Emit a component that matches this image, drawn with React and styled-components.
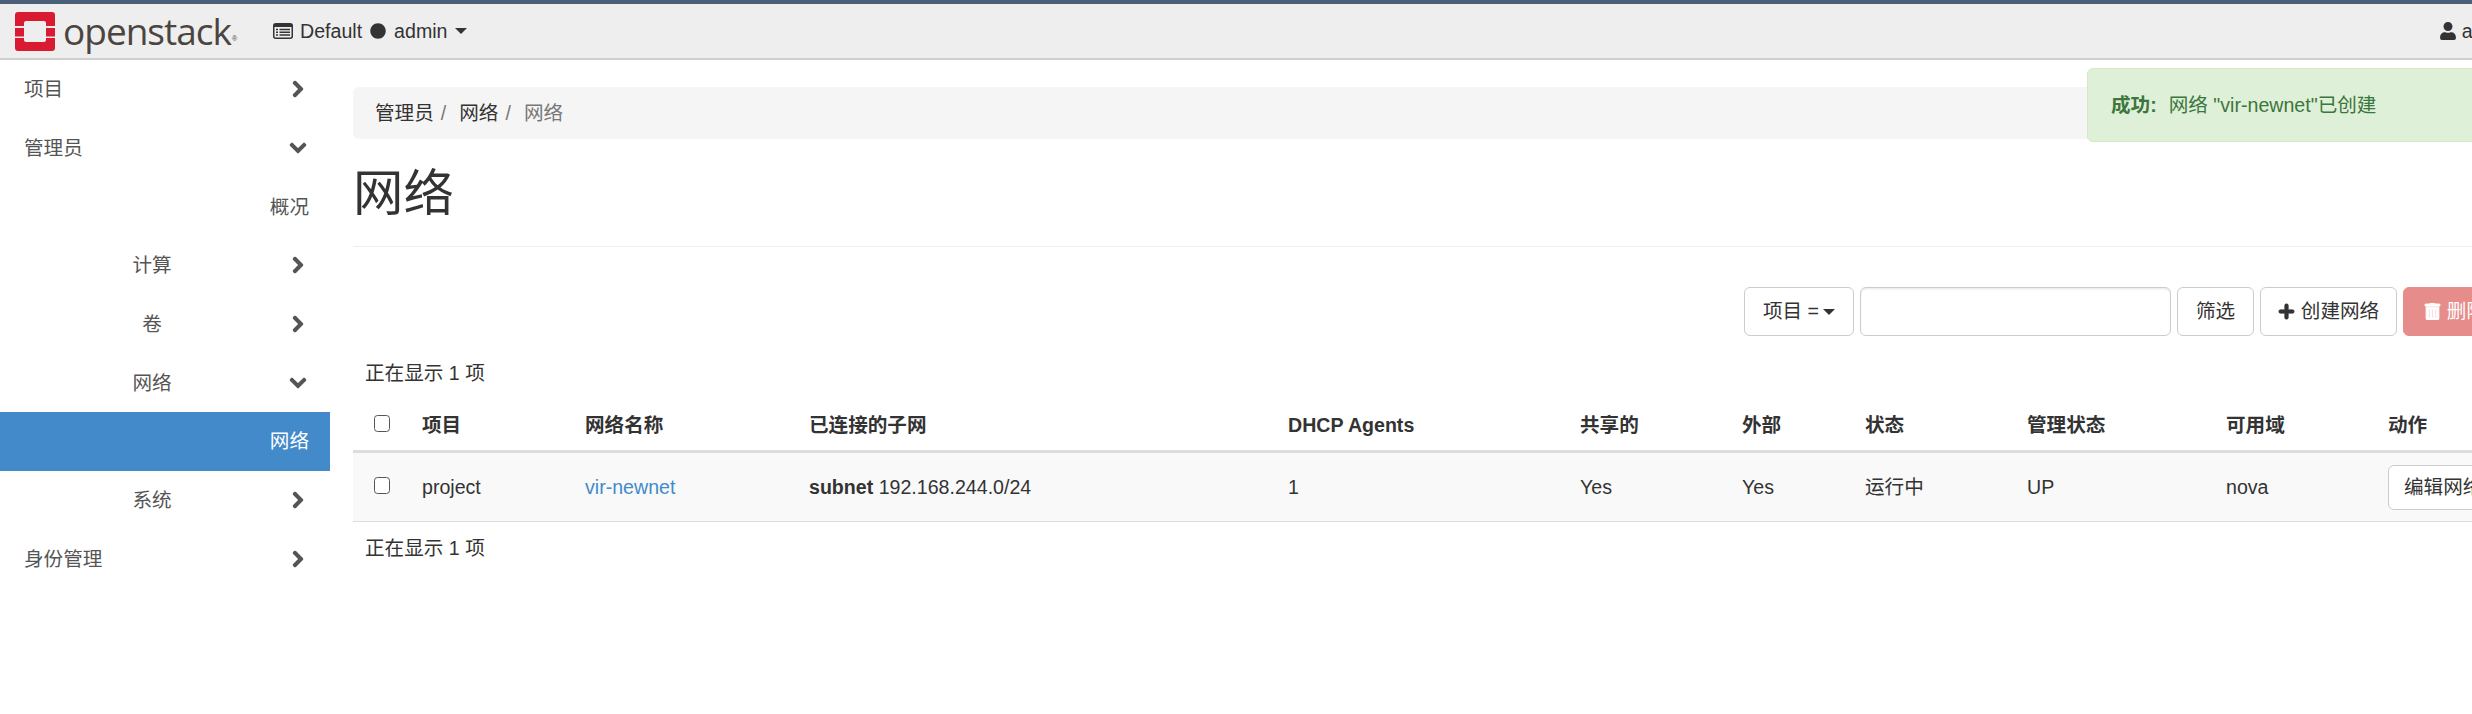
import styled, { createGlobalStyle } from "styled-components"
import { FaChevronRight, FaChevronDown, FaCircle, FaPlus, FaTrashAlt, FaUser } from "react-icons/fa"

const GlobalStyle = createGlobalStyle`
  html, body {
    margin: 0;
    overflow: hidden;
    background: #fff;
  }
  body {
    font-family: "Liberation Sans", "Noto Sans CJK SC", sans-serif;
    font-size: 19.6px;
    line-height: 1.43;
    color: #333;
  }
`;

const navItems = [
  { label: '项目', level: 1, arrow: 'right' },
  { label: '管理员', level: 1, arrow: 'down' },
  { label: '概况', level: 3 },
  { label: '计算', level: 2, arrow: 'right' },
  { label: '卷', level: 2, arrow: 'right' },
  { label: '网络', level: 2, arrow: 'down' },
  { label: '网络', level: 3, active: true },
  { label: '系统', level: 2, arrow: 'right' },
  { label: '身份管理', level: 1, arrow: 'right' },
];

const columns = [
  { title: '项目', width: 163 },
  { title: '网络名称', width: 224 },
  { title: '已连接的子网', width: 479 },
  { title: 'DHCP Agents', width: 292 },
  { title: '共享的', width: 162 },
  { title: '外部', width: 123 },
  { title: '状态', width: 162 },
  { title: '管理状态', width: 199 },
  { title: '可用域', width: 162 },
  { title: '动作', width: 240 },
];

const Page = styled.div`
  position: relative;
  width: 2617px;
`;

const TopBar = styled.header`
  display: flex;
  align-items: center;
  box-sizing: border-box;
  height: 60px;
  padding-right: 82px;
  background: #eee;
  border-top: 4px solid #4a5f78;
  border-bottom: 2px solid #cfcfcf;
`;

const Logo = styled.div`
  display: flex;
  align-items: center;
  width: 273px;
  padding-left: 15px;
  box-sizing: border-box;
  color: #4b4541;
`;

const LogoWord = styled.span`
  margin-left: 8px;
  font-family: "Open Sans", sans-serif;
  font-size: 37px;
  font-weight: 500;
  line-height: 40px;
  letter-spacing: -1px;
`;

const LogoMark = styled.span`
  align-self: flex-end;
  margin: 0 0 8px 1px;
  font-size: 7px;
  line-height: 8px;
`;

const Scope = styled.div`
  display: flex;
  align-items: center;
  color: #333;
`;

const ScopeDot = styled(FaCircle)`
  width: 16px;
  height: 16px;
  margin: 0 8px;
`;

const Caret = styled.span`
  display: inline-block;
  margin-left: ${(props) => props.$gap || 8}px;
  border-top: 6px solid currentColor;
  border-left: 6px solid transparent;
  border-right: 6px solid transparent;
`;

const UserMenu = styled.div`
  display: flex;
  align-items: center;
  margin-left: auto;
`;

const UserIcon = styled(FaUser)`
  width: 16px;
  height: 18px;
  margin-right: 6px;
`;

const Body = styled.div`
  display: flex;
`;

const Sidebar = styled.nav`
  flex: 0 0 330px;
`;

const NavRow = styled.div`
  display: flex;
  align-items: center;
  box-sizing: border-box;
  height: 58.7px;
  padding: 0 ${(props) => (props.$level === 3 ? 21 : 22)}px 0 24px;
  color: ${(props) => (props.$active ? '#fff' : '#555')};
  background: ${(props) => (props.$active ? '#428aca' : 'transparent')};
`;

const NavLabel = styled.span`
  flex: 1;
  padding-right: ${(props) => (props.$level === 2 ? 8 : 0)}px;
  text-align: ${(props) => ({ 1: 'left', 2: 'center', 3: 'right' })[props.$level]};
`;

const NavArrow = styled.span`
  display: flex;
  justify-content: center;
  flex: 0 0 20px;
  color: #555;

  svg {
    width: 18px;
    height: 18px;
    stroke: currentColor;
    stroke-width: 36;
  }
`;

const Main = styled.main`
  flex: 1;
  min-width: 0;
  padding-left: 23px;
`;

const Breadcrumb = styled.ol`
  display: flex;
  align-items: center;
  box-sizing: border-box;
  height: 52px;
  margin: 27px 0 0;
  padding: 0 22px;
  list-style: none;
  background: #f5f5f5;
  border-radius: 6px;
`;

const Crumb = styled.li`
  color: ${(props) => (props.$current ? '#777' : '#333')};
`;

const CrumbDivider = styled.li`
  padding: 0 13px 0 7px;
  color: #777;
`;

const PageHeader = styled.div`
  display: flex;
  align-items: center;
  box-sizing: border-box;
  height: 108px;
  padding-top: 2px;
  border-bottom: 1.5px solid #eee;
`;

const Title = styled.h1`
  margin: 0;
  font-size: 50.4px;
  font-weight: 400;
  line-height: 1.1;
  color: #333;
`;

const Toolbar = styled.div`
  display: flex;
  justify-content: flex-end;
  gap: 6px;
  margin-top: 40px;
  padding-right: 71px;
`;

const ToolButton = styled.button`
  display: inline-flex;
  align-items: center;
  justify-content: center;
  gap: 6px;
  box-sizing: border-box;
  width: ${(props) => props.$width}px;
  height: 49px;
  padding: 0;
  font: inherit;
  white-space: nowrap;
  overflow: hidden;
  color: ${(props) => (props.$danger ? '#fff' : '#333')};
  background: ${(props) => (props.$danger ? '#e68d8b' : '#fff')};
  border: 1.5px solid ${(props) => (props.$danger ? '#e68d8b' : '#ccc')};
  border-radius: 6px;

  svg {
    width: 17px;
    height: 17px;
    stroke: currentColor;
    stroke-width: 30;
  }
`;

const FilterInput = styled.input`
  box-sizing: border-box;
  width: 311px;
  height: 49px;
  background: #fff;
  border: 1.5px solid #ccc;
  border-radius: 6px;
  box-shadow: inset 0 1.5px 1.5px rgba(0, 0, 0, 0.075);
`;

const CountLine = styled.div`
  padding-left: 12px;
  line-height: 28px;
  margin-top: ${(props) => props.$top}px;
`;

const Table = styled.table`
  width: 2264px;
  margin-top: 14px;
  table-layout: fixed;
  border-collapse: collapse;
`;

const HeadCell = styled.th`
  height: 49px;
  padding: 0 11px;
  text-align: left;
  font-weight: 700;
  border-bottom: 3px solid #ddd;
`;

const Row = styled.tr`
  background: #f9f9f9;
`;

const Cell = styled.td`
  height: 68px;
  padding: 0 11px;
  border-bottom: 1.5px solid #ddd;
  white-space: nowrap;
  overflow: hidden;
`;

const CheckCell = styled(Cell)`
  text-align: center;
  padding: 0;
`;

const CheckHead = styled(HeadCell)`
  text-align: center;
  padding: 0;
`;

const Check = styled.input.attrs({ type: 'checkbox' })`
  appearance: none;
  box-sizing: border-box;
  width: 16px;
  height: 17px;
  margin: 4px 0 0;
  background: #fff;
  border: 1.5px solid #555;
  border-radius: 3.5px;
`;

const NetLink = styled.a`
  color: #428bca;
  text-decoration: none;
`;

const EditButton = styled.button`
  height: 45px;
  padding: 0 15px;
  font: inherit;
  color: #333;
  background: #fff;
  border: 1.5px solid #ccc;
  border-radius: 6px;
  white-space: nowrap;
`;

const Toast = styled.div`
  position: absolute;
  top: 68px;
  left: 2087px;
  display: flex;
  align-items: center;
  gap: 12px;
  box-sizing: border-box;
  width: 500px;
  height: 74px;
  padding-left: 23px;
  color: #3c763d;
  background: #dff0d8;
  border: 1.5px solid #d6e9c6;
  border-radius: 6px;
`;

const OpenStackIcon = () => (
  <svg width="40" height="39" viewBox="0 0 40 39">
    <path fill="#da1a32" d="M3 0h34a3 3 0 0 1 3 3v11h-9v-3a2 2 0 0 0-2-2H11a2 2 0 0 0-2 2v3H0V3a3 3 0 0 1 3-3z" />
    <rect fill="#da1a32" x="0" y="16" width="9" height="8.5" />
    <rect fill="#da1a32" x="31" y="16" width="9" height="8.5" />
    <path fill="#da1a32" d="M0 26h9v2a2 2 0 0 0 2 2h18a2 2 0 0 0 2-2v-2h9v10a3 3 0 0 1-3 3H3a3 3 0 0 1-3-3z" />
  </svg>
);

// list-alt as in the reference: dark title band with three rows below it
const ScopeIcon = () => (
  <svg width="20" height="16" viewBox="0 0 20 16" style={{ marginRight: 7 }}>
    <rect x="0.75" y="0.75" width="18.5" height="14.5" rx="2" fill="none" stroke="#333" strokeWidth="1.5" />
    <rect x="1" y="1" width="18" height="3" fill="#333" />
    <path stroke="#333" strokeWidth="1.4" d="M3 6.5h2M6.5 6.5H17M3 9.2h2M6.5 9.2H17M3 12h2M6.5 12H17" />
  </svg>
);

const App = () => {
  return (
    <Page>
      <GlobalStyle />
      <TopBar>
        <Logo>
          <OpenStackIcon />
          <LogoWord>openstack</LogoWord>
          <LogoMark>®</LogoMark>
        </Logo>
        <Scope>
          <ScopeIcon />
          Default
          <ScopeDot />
          admin
          <Caret />
        </Scope>
        <UserMenu>
          <UserIcon />
          admin
          <Caret />
        </UserMenu>
      </TopBar>
      <Body>
        <Sidebar>
          {navItems.map(({ label, level, arrow, active }, index) => (
            <NavRow key={index} $level={level} $active={active}>
              <NavLabel $level={level}>{label}</NavLabel>
              {arrow && (
                <NavArrow>{arrow === 'down' ? <FaChevronDown /> : <FaChevronRight />}</NavArrow>
              )}
            </NavRow>
          ))}
        </Sidebar>
        <Main>
          <Breadcrumb>
            <Crumb>管理员</Crumb>
            <CrumbDivider>/</CrumbDivider>
            <Crumb>网络</Crumb>
            <CrumbDivider>/</CrumbDivider>
            <Crumb $current>网络</Crumb>
          </Breadcrumb>
          <PageHeader>
            <Title>网络</Title>
          </PageHeader>
          <Toolbar>
            <ToolButton $width={110}>
              项目 =<Caret $gap={-2} />
            </ToolButton>
            <FilterInput />
            <ToolButton $width={77}>筛选</ToolButton>
            <ToolButton $width={137}>
              <FaPlus />
              创建网络
            </ToolButton>
            <ToolButton $width={143} $danger>
              <FaTrashAlt />
              删除网络
            </ToolButton>
          </Toolbar>
          <CountLine $top={23}>正在显示 1 项</CountLine>
          <Table>
            <colgroup>
              <col style={{ width: 58 }} />
              {columns.map(({ title, width }) => (
                <col key={title} style={{ width }} />
              ))}
            </colgroup>
            <thead>
              <tr>
                <CheckHead>
                  <Check readOnly />
                </CheckHead>
                {columns.map(({ title }) => (
                  <HeadCell key={title}>{title}</HeadCell>
                ))}
              </tr>
            </thead>
            <tbody>
              <Row>
                <CheckCell>
                  <Check readOnly />
                </CheckCell>
                <Cell>project</Cell>
                <Cell>
                  <NetLink>vir-newnet</NetLink>
                </Cell>
                <Cell>
                  <strong>subnet</strong> 192.168.244.0/24
                </Cell>
                <Cell>1</Cell>
                <Cell>Yes</Cell>
                <Cell>Yes</Cell>
                <Cell>运行中</Cell>
                <Cell>UP</Cell>
                <Cell>nova</Cell>
                <Cell>
                  <EditButton>编辑网络</EditButton>
                </Cell>
              </Row>
            </tbody>
          </Table>
          <CountLine $top={12}>正在显示 1 项</CountLine>
        </Main>
      </Body>
      <Toast>
        <strong>成功:</strong>
        <span>网络 "vir-newnet"已创建</span>
      </Toast>
    </Page>
  )
}

export default App
